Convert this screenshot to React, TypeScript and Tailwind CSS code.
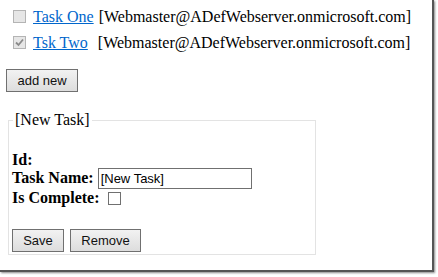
import React from "react";

const serif = { fontFamily: '"Liberation Serif", "Times New Roman", serif' };

function Box({ checked }: { checked?: boolean }) {
  return (
    <span className="inline-flex h-[13px] w-[13px] items-center justify-center border border-[#b4b4b4] bg-[#e6e6e6]">
      {checked && (
        <svg width="9" height="9" viewBox="0 0 9 9">
          <path d="M1 4.5 L3.5 7 L8 1.5" fill="none" stroke="#8a8a8a" strokeWidth="1.8" />
        </svg>
      )}
    </span>
  );
}

function Btn({ children, w }: { children: React.ReactNode; w: string }) {
  return (
    <button
      className={`${w} h-[23px] border border-[#707070] bg-gradient-to-b from-[#f2f2f2] to-[#dddddd] text-[13px] text-[#111] flex items-center justify-center`}
      style={{ fontFamily: '"Liberation Sans", Arial, sans-serif' }}
    >
      {children}
    </button>
  );
}

export default function App() {
  return (
    <div className="w-[438px] h-[277px] bg-white relative overflow-hidden" style={serif}>
      <div className="w-[434px] h-[272px] bg-white border-r-[2px] border-b-[2px] border-[#555] shadow-[1px_1px_2px_#888]">
        <div className="flex flex-col pt-[8px] pl-[13px] text-[16px] text-black gap-[9px]">
          <div className="flex items-center h-[17px]">
            <Box />
            <a className="ml-[7px] text-[#0066cc] underline">Task One</a>
            <span className="ml-[5px]">[Webmaster@ADefWebserver.onmicrosoft.com]</span>
          </div>
          <div className="flex items-center h-[17px]">
            <Box checked />
            <a className="ml-[7px] text-[#0066cc] underline">Tsk Two</a>
            <span className="ml-[10px]">[Webmaster@ADefWebserver.onmicrosoft.com]</span>
          </div>
        </div>
        <div className="pl-[6px] mt-[18px]">
          <Btn w="w-[72px]">add new</Btn>
        </div>
        <fieldset className="ml-[8px] mt-[19px] w-[308px] h-[144px] border border-[#e3e3e3] pl-[3px] pr-0 pt-0 pb-0">
          <legend className="px-[2px] ml-[1px] text-[16px] leading-[18px]">[New Task]</legend>
          <div className="flex flex-col mt-[22px] text-[16px] font-bold leading-[18px]">
            <div>Id:</div>
            <div className="flex items-center h-[20px] mt-[-1px]">
              <span>Task Name:</span>
              <input
                readOnly
                value="[New Task]"
                className="ml-[4px] w-[154px] h-[21px] border border-[#707070] px-[2px] text-[13px] font-normal outline-none"
                style={{ fontFamily: '"Liberation Sans", Arial, sans-serif' }}
              />
            </div>
            <div className="flex items-center h-[20px]">
              <span>Is Complete:</span>
              <span className="ml-[8px] inline-block h-[13px] w-[13px] border border-[#707070] bg-white" />
            </div>
          </div>
          <div className="flex gap-[6px] mt-[21px]">
            <Btn w="w-[52px]">Save</Btn>
            <Btn w="w-[71px]">Remove</Btn>
          </div>
        </fieldset>
      </div>
    </div>
  );
}
